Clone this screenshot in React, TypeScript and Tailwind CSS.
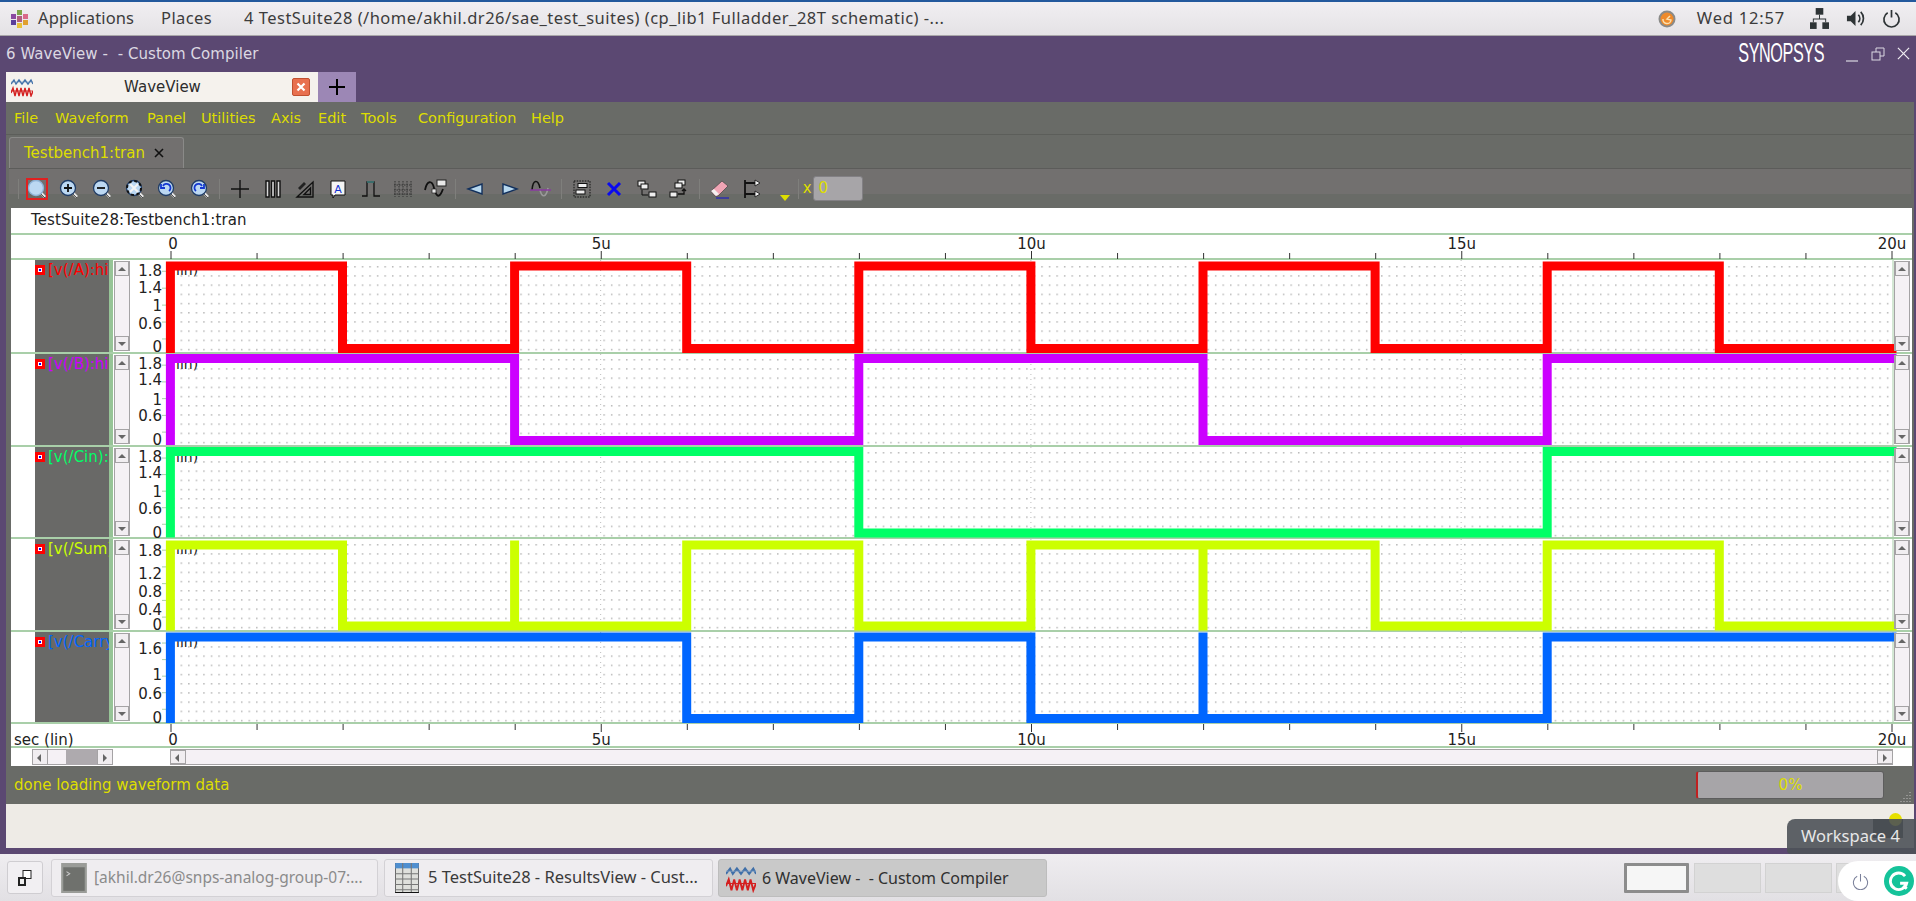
import React from "react";

const X0 = 40.4; // 0 on the time axis, inside the row svg
const US = 86.05;
const tx = (t: number) => X0 + t * US;
const TICKS = Array.from({ length: 21 }, (_, i) => i);

const ROWS = [
  { name: "[v(/A):hi", color: "#ff0000", h: 94, hi: 6, lo: 88.5, toggles: [2, 4, 6, 8, 10, 12, 14, 16, 18], dotY: 6,
    labels: [["1.8", 10], ["1.4", 27], ["1", 45], ["0.6", 63], ["0", 86]] },
  { name: "[v(/B):hi", color: "#cc00ff", h: 93, hi: 4.5, lo: 86.5, toggles: [4, 8, 12, 16], dotY: 5,
    labels: [["1.8", 9], ["1.4", 25], ["1", 45], ["0.6", 61], ["0", 85]] },
  { name: "[v(/Cin):hi", color: "#00ff66", h: 92, hi: 4.5, lo: 86, toggles: [8, 16], dotY: 5,
    labels: [["1.8", 9], ["1.4", 25], ["1", 44], ["0.6", 61], ["0", 85]] },
  { name: "[v(/Sum)", color: "#ccff00", h: 93, hi: 6, lo: 87, toggles: [2, 4, 4, 6, 8, 10, 12, 12, 14, 16, 18], dotY: 5,
    labels: [["1.8", 11], ["1.2", 34], ["0.8", 52], ["0.4", 70], ["0", 85]] },
  { name: "[v(/Carry", color: "#0066ff", h: 92, hi: 5, lo: 86.5, toggles: [6, 8, 10, 12, 12, 16], dotY: 5,
    labels: [["1.6", 16], ["1", 42], ["0.6", 61], ["0", 85]] },
] as const;

const MENU = [
  ["File", "w-[41px]"],
  ["Waveform", "w-[92px]"],
  ["Panel", "w-[54px]"],
  ["Utilities", "w-[70px]"],
  ["Axis", "w-[47px]"],
  ["Edit", "w-[43px]"],
  ["Tools", "w-[57px]"],
  ["Configuration", "w-[113px]"],
  ["Help", "w-[40px]"],
];

function tracePath(toggles: readonly number[], hi: number, lo: number) {
  let d = `M${tx(0)} ${lo}L${tx(0)} ${hi}`;
  let level = true;
  let from = 0;
  for (const t of toggles) {
    if (t > from) d += `M${tx(from)} ${level ? hi : lo}L${tx(t)} ${level ? hi : lo}`;
    d += `M${tx(t)} ${hi}L${tx(t)} ${lo}`;
    level = !level;
    from = t;
  }
  d += `M${tx(from)} ${level ? hi : lo}L${1762} ${level ? hi : lo}`;
  return d;
}

function Arrow({ dir }: { dir: "up" | "down" | "left" | "right" }) {
  const pts = { up: "1,6 9,6 5,2", down: "1,2 9,2 5,6", left: "6,1 6,9 2,5", right: "3,1 3,9 7,5" }[dir];
  return (
    <svg width="10" height="10" viewBox="0 0 10 8" className="block">
      <polygon points={pts} fill="#666" />
    </svg>
  );
}

function ScrollBtn({ dir }: { dir: "up" | "down" | "left" | "right" }) {
  const size = dir === "up" || dir === "down" ? "h-[15px] w-full" : "w-[16px] h-full";
  return (
    <div className={`${size} shrink-0 flex items-center justify-center bg-[#f1eef1] border border-[#a5a3a5]`}>
      <Arrow dir={dir} />
    </div>
  );
}

function VScroll() {
  return (
    <div className="w-[16px] shrink-0 flex flex-col justify-between bg-[#f5f1f5] border-x border-[#a5a3a5] my-px">
      <ScrollBtn dir="up" />
      <ScrollBtn dir="down" />
    </div>
  );
}

function Row({ row }: { row: (typeof ROWS)[number] }) {
  const id = `dots-${row.name.charCodeAt(4)}`;
  return (
    <div style={{ height: row.h }} className="flex border-b-2 border-[#a9cfa9]">
      <div className="w-[24px] shrink-0" />
      <div className="w-[74px] shrink-0 bg-[#696967] overflow-hidden flex items-start pt-[1px] gap-[3px]">
        <div className="w-[10px] h-[10px] mt-[4px] shrink-0 bg-white border-[3px] border-[#ff0000] flex items-center justify-center">
          <div className="w-[2px] h-[2px] bg-[#0000ff]" />
        </div>
        <span style={{ color: row.color }} className="text-[15px] leading-[18px] whitespace-nowrap">{row.name}</span>
      </div>
      <div className="w-[4px] shrink-0 bg-[#97c497] mr-px" />
      <VScroll />
      <svg className="flex-1 h-full overflow-visible" style={{ minWidth: 0 }}>
        <defs>
          <pattern id={id} x="43" y={row.dotY} width="7.55" height="9.2" patternUnits="userSpaceOnUse">
            <rect width="1.5" height="1.5" fill="#b8b8b8" />
          </pattern>
        </defs>
        <rect x="36" y="0" width="1727" height="100%" fill={`url(#${id})`} />
        {[5, 10, 15].map((t) => (
          <line key={t} x1={tx(t)} x2={tx(t)} y1="0" y2="100%" stroke="#bdbdbd" strokeDasharray="1 4" />
        ))}
        <line x1="1763" x2="1763" y1="0" y2="100%" stroke="#a9cfa9" />
        {[0.12, 0.3, 0.48, 0.66, 0.84].map((f) => (
          <line key={f} x1="32" x2="36" y1={row.h * f} y2={row.h * f} stroke="#a9cfa9" />
        ))}
        {row.labels.map(([label, y]) => (
          <text key={label} x="32" y={y + 5.5} textAnchor="end" fontSize="15" fill="#222">{label}</text>
        ))}
        <text x="46" y="15" fontSize="14" fill="#222">lin)</text>
        <path d={tracePath(row.toggles, row.hi, row.lo)} stroke={row.color} strokeWidth="9" strokeLinecap="square" fill="none" />
      </svg>
      <div className="w-[16px] shrink-0 flex mr-[2px]"><VScroll /></div>
    </div>
  );
}

function TimeAxis({ bottom }: { bottom?: boolean }) {
  const y1 = bottom ? 0 : 24;
  return (
    <div className={`relative h-[24px] ${bottom ? "border-b-2 border-[#a9cfa9]" : "border-b-0"}`}>
      <svg className="w-full h-full overflow-visible">
        {TICKS.map((t) => {
          const major = t % 5 === 0;
          const len = major ? 8 : 6;
          return (
            <line key={t} x1={160 + t * US} x2={160 + t * US} y1={y1} y2={bottom ? len : y1 - len} stroke="#333" strokeWidth="1" />
          );
        })}
        {[0, 5, 10, 15, 20].map((t) => (
          <text key={t} x={t === 0 ? 162 : 160 + t * US} y={bottom ? 21 : 14} textAnchor="middle" fontSize="15" fill="#222">
            {t === 0 ? "0" : `${t}u`}
          </text>
        ))}
        {bottom && <text x="3" y="21" fontSize="15" fill="#222">sec (lin)</text>}
      </svg>
    </div>
  );
}

function WaveIcon({ className }: { className: string }) {
  return (
    <svg viewBox="0 0 22 20" className={className} fill="none">
      <path d="M0 7 L3 3 L5 7 L8 3 L11 7 L14 3 L17 7 L20 3 L22 7" stroke="#3f6fa8" strokeWidth="1.4" />
      <line x1="0" x2="22" y1="5" y2="5" stroke="#7d9cc0" strokeWidth="0.6" />
      <path d="M0 16 L2 11 L4 19 L6 11 L8 19 L10 11 L12 19 L14 11 L16 19 L18 11 L20 19 L22 14" stroke="#d42020" strokeWidth="1.4" />
      <line x1="0" x2="22" y1="14" y2="14" stroke="#d42020" strokeWidth="0.8" />
    </svg>
  );
}

function Mag({ children, boxed }: { children?: React.ReactNode; boxed?: boolean }) {
  return (
    <svg viewBox="0 0 20 20" className={`w-[20px] h-[20px] ${boxed ? "outline-2 -outline-offset-1 outline-[#e02020]" : ""}`}>
      <line x1="12" y1="12" x2="18" y2="18" stroke="#e8e8e8" strokeWidth="2.6" />
      <line x1="13" y1="14" x2="18" y2="19" stroke="#333" strokeWidth="0.8" />
      <circle cx="9" cy="9" r="7.5" fill="#bcd8f2" stroke={boxed ? "#8fb4d8" : "#1f3c66"} strokeWidth="1.3" />
      {children}
    </svg>
  );
}

const S = { fill: "none", stroke: "#111", strokeWidth: 1.4 };

const TOOLS: (React.ReactNode | "sep")[] = [
  <Mag boxed />,
  <Mag><path d="M5 9h8M9 5v8" stroke="#111" strokeWidth="1.8" /></Mag>,
  <Mag><path d="M5 9h8" stroke="#111" strokeWidth="1.8" /></Mag>,
  <Mag><path d="M5 5l8 8M13 5l-8 8" stroke="#f4f4f4" strokeWidth="2" /><circle cx="9" cy="9" r="7" fill="none" stroke="#111" strokeWidth="2" strokeDasharray="3 2.5" /></Mag>,
  <Mag><path d="M12 12A4 4 0 1 0 6 7M4 5v4h4" fill="none" stroke="#1438d0" strokeWidth="1.8" /></Mag>,
  <Mag><path d="M6 12A4 4 0 1 1 12 7M14 5v4h-4" fill="none" stroke="#1438d0" strokeWidth="1.8" /></Mag>,
  "sep",
  <svg viewBox="0 0 20 20" className="w-[20px] h-[20px]"><path d="M10 1v18M1 10h18" {...S} /></svg>,
  <svg viewBox="0 0 20 20" className="w-[20px] h-[20px]"><path d="M3 2h3v16H3zM8.5 2h3v16h-3zM14 2h3v16h-3z" {...S} fill="#d8d8d8" /></svg>,
  <svg viewBox="0 0 20 20" className="w-[20px] h-[20px]"><path d="M18 3v15H2zM15.5 9v6.5H9z" {...S} /><path d="M3 9l6-6 2 2-6 6z" fill="#222" /></svg>,
  <svg viewBox="0 0 20 20" className="w-[20px] h-[20px]"><path d="M3 2h14v14H7l-2 3v-3H3z" fill="#f4f4f4" stroke="#111" /><text x="10" y="13.5" textAnchor="middle" fontSize="11" fill="#1030d0">A</text></svg>,
  <svg viewBox="0 0 20 20" className="w-[20px] h-[20px]"><path d="M1 17h5V3h7v14h6" fill="none" stroke="#111" strokeWidth="1.3" /><path d="M6 3h7" stroke="#4fb0b0" /></svg>,
  <svg viewBox="0 0 20 20" className="w-[20px] h-[20px]"><path d="M2 2v16M6 2v16M10 2v16M14 2v16M18 2v16M1 6h18M1 11h18M1 15h18" stroke="#333" strokeWidth="1" strokeDasharray="1.5 1" fill="none" /></svg>,
  <svg viewBox="0 0 24 20" className="w-[24px] h-[20px]"><path d="M1 11C3 1 8 1 10 9s5 12 9 1" {...S} strokeWidth="1.8" /><rect x="13" y="1" width="9" height="6" fill="#e8e8e8" stroke="#222" /><rect x="8" y="10" width="4" height="4" fill="#e8e8e8" stroke="#222" strokeWidth="0.7" /></svg>,
  "sep",
  <svg viewBox="0 0 20 20" className="w-[20px] h-[20px]"><path d="M2 10l14-5v10z" fill="#b7d8ef" stroke="#12305c" strokeWidth="1.4" /></svg>,
  <svg viewBox="0 0 20 20" className="w-[20px] h-[20px]"><path d="M18 10L4 5v10z" fill="#b7d8ef" stroke="#12305c" strokeWidth="1.4" /></svg>,
  <svg viewBox="0 0 22 20" className="w-[22px] h-[20px]"><path d="M2 11C3 0 8 0 10 9" {...S} strokeWidth="1.6" /><path d="M10 11c2 8 6 8 8-2" fill="none" stroke="#999" strokeWidth="1.6" /><path d="M0 11h21" stroke="#8a3aa0" strokeWidth="1.5" /></svg>,
  "sep",
  <svg viewBox="0 0 20 20" className="w-[20px] h-[20px]"><rect x="2" y="2" width="16" height="16" fill="none" stroke="#111" strokeDasharray="1.5 1.2" /><rect x="6" y="4.5" width="9" height="4" fill="#eee" stroke="#111" /><rect x="4" y="11" width="9" height="4" fill="#eee" stroke="#111" /></svg>,
  <svg viewBox="0 0 20 20" className="w-[20px] h-[20px]"><path d="M4 4l12 12M16 4L4 16" stroke="#0a0af0" strokeWidth="3" /></svg>,
  <svg viewBox="0 0 20 20" className="w-[20px] h-[20px]"><rect x="1" y="2" width="7" height="5" fill="#eee" stroke="#111" /><rect x="4" y="5" width="7" height="5" fill="#eee" stroke="#111" /><rect x="12" y="13" width="7" height="5" fill="#eee" stroke="#111" /><path d="M5 11v5h6" fill="none" stroke="#111" /></svg>,
  <svg viewBox="0 0 20 20" className="w-[20px] h-[20px]"><rect x="9" y="1" width="7" height="5" fill="#eee" stroke="#111" /><rect x="6" y="4" width="7" height="5" fill="#eee" stroke="#111" /><rect x="1" y="13" width="7" height="5" fill="#eee" stroke="#111" /><path d="M9 15h6v-4M13 12l2-2 2 2" fill="none" stroke="#111" strokeWidth="1.3" /></svg>,
  "sep",
  <svg viewBox="0 0 22 20" className="w-[22px] h-[20px]"><path d="M2 12L13 2l6 5L9 17H6z" fill="#f0a4b4" stroke="#444" strokeWidth="0.7" /><path d="M2 12l5 5 3-2-5-5z" fill="#f4f0f0" /><path d="M7 19h13" stroke="#1010d0" strokeWidth="1" /></svg>,
  <svg viewBox="0 0 20 20" className="w-[20px] h-[20px]"><path d="M3 1v18M3 4h10M3 15h10" stroke="#111" strokeWidth="1.8" /><path d="M13 1l5 3-5 3zM13 12l5 3-5 3z" fill="#f2f2f2" stroke="#111" strokeWidth="0.8" /></svg>,
];

function Toolbar() {
  return (
    <div className="h-[40px] flex items-center pl-[8.5px] mx-[3px] border-t border-[#5c5c5a] bg-[linear-gradient(#72706f_0,#72706f_65%,#696b67_65%)]">
      <div className="w-px h-[20px] bg-[#7f7f7c] mr-[2px]" />
      {TOOLS.map((t, i) =>
        t === "sep" ? (
          <div key={i} className="w-px h-[20px] bg-[#7f7f7c] mx-[3.4px]" />
        ) : (
          <div key={i} className="w-[32.6px] h-[24px] flex items-center justify-center">{t}</div>
        )
      )}
      <svg width="10" height="6" viewBox="0 0 10 6" className="ml-[11px] mt-[18px]"><polygon points="0,0 10,0 5,6" fill="#dede00" /></svg>
      <div className="w-px h-[20px] bg-[#7f7f7c] ml-[8px]" />
      <span className="ml-[4px] text-[15px] text-[#dede00]">x</span>
      <div className="ml-[1px] w-[50px] h-[25px] rounded-[3px] bg-[#a7a5a8] border border-[#828084] text-[15px] leading-[22px] pl-[5px] text-[#dede00]">0</div>
    </div>
  );
}

function HScrollbars() {
  return (
    <div className="h-[18px] flex">
      <div className="w-[21px]" />
      <div className="w-[81px] h-[16px] mt-[1px] flex">
        <ScrollBtn dir="left" />
        <div className="w-[18px] bg-[#f5f1f5] border-y border-[#a5a3a5]" />
        <div className="w-[31px] bg-[#aeaaae]" />
        <ScrollBtn dir="right" />
      </div>
      <div className="w-[57px]" />
      <div className="flex-1 h-[16px] mt-[1px] flex justify-between bg-[#f5f1f5] border-y border-[#a5a3a5]">
        <ScrollBtn dir="left" />
        <ScrollBtn dir="right" />
      </div>
      <div className="w-[19px]" />
    </div>
  );
}

function TopPanel() {
  const ui = "[font-family:'Noto_Sans',sans-serif]";
  return (
    <div className={`${ui} h-[36px] shrink-0 border-t-2 border-[#23599d] border-b border-b-[#a8a6a8] bg-[linear-gradient(#f1eff2,#e4e2e5)] flex items-center text-[16.5px] text-[#3c3c3c]`}>
      <svg viewBox="0 0 18 18" className="w-[18px] h-[18px] ml-[11px] mr-[9px]">
        <rect x="6" y="0" width="5" height="5" fill="#7fa64a" />
        <rect x="12" y="4" width="5" height="5" fill="#d96a8a" />
        <rect x="12" y="10" width="5" height="5" fill="#e0a030" />
        <rect x="6" y="13" width="5" height="5" fill="#e8c23a" />
        <rect x="0" y="10" width="5" height="5" fill="#5a3f9a" />
        <rect x="0" y="4" width="5" height="5" fill="#8a4aa0" />
        <rect x="6" y="6" width="5" height="6" fill="#b06080" />
      </svg>
      <span className="tracking-[0.1px]">Applications</span>
      <span className="ml-[27px] tracking-[0.4px]">Places</span>
      <span className="ml-[32px] tracking-[0.48px]">4 TestSuite28 (/home/akhil.dr26/sae_test_suites) (cp_lib1 Fulladder_28T schematic) -...</span>
      <div className="ml-auto flex items-center">
        <svg viewBox="0 0 18 18" className="w-[18px] h-[18px]"><circle cx="9" cy="9" r="8.5" fill="#8a8a88" /><circle cx="9" cy="9" r="6.5" fill="#ee8a2a" /><path d="M5 9a4 4 0 0 0 8 1l-4-1 3-3" fill="none" stroke="#fbe0b0" strokeWidth="1.5" /></svg>
        <span className="ml-[21px] tracking-[0.8px]">Wed 12:57</span>
        <svg viewBox="0 0 20 22" className="w-[19px] h-[21px] ml-[25px]" fill="#2e3436"><rect x="6" y="0" width="8" height="7" /><rect x="0" y="15" width="7" height="7" /><rect x="13" y="15" width="7" height="7" /><path d="M9.5 7h1v4H17v4h-1v-3H4v3H3v-4h6.500z" /></svg>
        <svg viewBox="0 0 20 20" className="w-[19px] h-[19px] ml-[17px]" fill="none"><path d="M1 7h4l5-5v16l-5-5H1z" fill="#2e3436" /><path d="M13 6a6 6 0 0 1 0 8M15.500 3a10 10 0 0 1 0 14" stroke="#2e3436" strokeWidth="1.8" /></svg>
        <svg viewBox="0 0 20 20" className="w-[19px] h-[19px] ml-[17px] mr-[15px]" fill="none" stroke="#2e3436" strokeWidth="1.8"><path d="M6 4a8 8 0 1 0 8 0M10 1v8" /></svg>
      </div>
    </div>
  );
}

function TitleRow() {
  return (
    <div className="h-[36px] flex items-center pl-[6px] pt-[1px] text-[15px] tracking-[0.06px] text-[#dcd8e2]">
      <span className="whitespace-pre">6 WaveView -  - Custom Compiler</span>
      <div className="ml-auto flex items-center pr-[6px] pb-[2px]">
        <span className="[font-family:'Liberation_Sans',sans-serif] text-[27px] leading-none tracking-tight scale-x-[0.6] origin-right text-white mr-[8px]">SYNOPSYS</span>
        <svg viewBox="0 0 12 12" className="w-[12px] h-[12px] ml-[14px] mt-[4px]"><path d="M0 11h12" stroke="#dcd8e2" strokeWidth="1.2" /></svg>
        <svg viewBox="0 0 14 14" className="w-[14px] h-[14px] ml-[13px]" fill="none" stroke="#dcd8e2"><rect x="1" y="5" width="8" height="8" /><path d="M5 5V1h8v8H9" /></svg>
        <svg viewBox="0 0 14 14" className="w-[13px] h-[13px] ml-[12px]" fill="none" stroke="#f0eef2" strokeWidth="1.3"><path d="M1 1l12 12M13 1L1 13" /></svg>
      </div>
    </div>
  );
}

function TabRow() {
  return (
    <div className="h-[30px] flex pl-[6px]">
      <div className="w-[312px] relative flex items-center justify-center bg-[#f5f2ed] text-[15px] text-[#2c2c2c] pl-[1px] pt-[1px]">
        <WaveIcon className="absolute left-[5px] top-[5px] w-[22px] h-[20px]" />
        <span>WaveView</span>
        <div className="absolute right-[8px] top-[6px] w-[18px] h-[18px] rounded-[2px] bg-[#e8704f] border border-[#c05030] flex items-center justify-center">
          <svg viewBox="0 0 10 10" className="w-[10px] h-[10px]"><path d="M1.500 1.500l7 7M8.500 1.500l-7 7" stroke="#fff" strokeWidth="2.2" /></svg>
        </div>
      </div>
      <div className="w-[38px] bg-[#9c87b5] flex items-center justify-center">
        <svg viewBox="0 0 16 16" className="w-[16px] h-[16px]"><path d="M8 0v16M0 8h16" stroke="#000" strokeWidth="2" /></svg>
      </div>
    </div>
  );
}

function Taskbar() {
  const ui = "[font-family:'Noto_Sans',sans-serif]";
  const task = "h-[38px] rounded-[3px] border flex items-center whitespace-nowrap overflow-hidden";
  return (
    <div className={`${ui} relative h-[47px] shrink-0 bg-[linear-gradient(#efedf0,#e2e0e4)] flex items-center`}>
      <div className="w-[36px] h-[33px] ml-[7px] rounded-[3px] border border-[#cfcdd1] bg-[#f1eff2] flex items-center justify-center">
        <svg viewBox="0 0 14 16" className="w-[14px] h-[16px]"><rect x="5" y="0.500" width="8" height="8" fill="#fff" stroke="#222" /><rect x="0" y="7" width="8" height="9" fill="#222" /><rect x="2" y="9" width="4" height="5" fill="#eee" /></svg>
      </div>
      <div className={`${task} w-[327px] ml-[8px] pl-[9px] gap-[7px] text-[15.5px] bg-[#efedf0] border-[#d3d1d5] text-[#8b8b8b]`}>
        <svg viewBox="0 0 24 28" className="w-[26px] h-[30px] shrink-0"><rect x="0" y="0" width="24" height="28" fill="#9a9c98" /><rect x="2" y="4" width="20" height="22" fill="#6f716d" /><path d="M5 8l3 2-3 2" stroke="#c8c8c8" fill="none" /></svg>
        <span>[akhil.dr26@snps-analog-group-07:...</span>
      </div>
      <div className={`${task} w-[329px] ml-[6px] pl-[10px] gap-[9px] text-[16.5px] bg-[#efedf0] border-[#d3d1d5] text-[#3a3a3a]`}>
        <svg viewBox="0 0 22 28" className="w-[24px] h-[30px] shrink-0"><rect width="22" height="28" fill="#dfe0dc" stroke="#444" /><rect width="22" height="5" fill="#4f8fd0" /><path d="M7 0v28M15 0v28M0 10h22M0 15h22M0 20h22M0 25h22" stroke="#777" /><path d="M0 27.500h22" stroke="#111" /></svg>
        <span>5 TestSuite28 - ResultsView - Cust...</span>
      </div>
      <div className={`${task} w-[329px] ml-[5px] pl-[7px] gap-[6px] text-[16px] bg-[#c9c9c9] border-[#bdbdbd] text-[#303030]`}>
        <WaveIcon className="w-[30px] h-[30px] shrink-0" />
        <span className="whitespace-pre">6 WaveView -  - Custom Compiler</span>
      </div>
      <div className="w-[65px] h-[30px] ml-[577px] bg-[#f6f6f6] border-[3px] border-[#8c8c8c] rounded-[1px]" />
      <div className="w-[67px] h-[30px] ml-[5px] bg-[#dedede] border border-[#d2d2d2]" />
      <div className="w-[67px] h-[30px] ml-[4px] bg-[#dedede] border border-[#d2d2d2]" />
      <div className="w-[30px] h-[30px] ml-[4px] bg-[#dedede] border border-[#d2d2d2]" />
      <div className="absolute right-0 top-[7px] w-[78px] h-[40px] bg-white rounded-l-[20px] flex items-center">
        <svg viewBox="0 0 18 18" className="w-[17px] h-[17px] ml-[14px]" fill="none" stroke="#7a809a" strokeWidth="1.1"><path d="M5.500 3.500a7.500 7.500 0 1 0 7 0M9 1v8" /></svg>
        <div className="ml-[15px] w-[30px] h-[30px] rounded-full bg-[#15c39a] flex items-center justify-center">
          <svg viewBox="0 0 20 20" className="w-[22px] h-[22px]" fill="none" stroke="#fff" strokeWidth="2.600"><path d="M15.500 5.500A7.500 7.500 0 1 0 17 12h-6M14 14l3 3" /></svg>
        </div>
      </div>
    </div>
  );
}

export default function App() {
  return (
    <div className="relative w-[1916px] h-[901px] overflow-hidden flex flex-col bg-[#5b4872] [font-family:'DejaVu_Sans',sans-serif]">
      <TopPanel />
      <div className="flex-1 flex flex-col min-h-0">
        <TitleRow />
        <TabRow />
        <div className="flex flex-col mx-[6px] mr-[2px] mb-[6px] flex-1 min-h-0 bg-[#eeebe6]">
          <div className="bg-[#696b67] flex flex-col">
            <div className="h-[33px] flex items-center pl-[8px] pt-[1px] text-[14.5px] text-[#dede00] border-b border-[#5c5e5a]">
              {MENU.map(([m, w]) => (
                <span key={m} className={w}>{m}</span>
              ))}
            </div>
            <div className="h-[33px] flex items-end pl-[3px]">
              <div className="h-[31px] w-[175px] flex items-center pl-[14px] gap-[9px] rounded-t-[3px] border border-b-0 border-[#8a8a88] bg-[#72706f] text-[15px] text-[#dede00]">
                <span>Testbench1:tran</span>
                <svg viewBox="0 0 10 10" className="w-[10px] h-[10px]"><path d="M1 1l8 8M9 1l-8 8" stroke="#111" strokeWidth="1.6" /></svg>
              </div>
            </div>
            <Toolbar />
            <div className="mx-[5px] mr-[2px] bg-white text-[14px] text-[#222]">
              <div className="h-[27px] flex items-center pl-[20px] text-[15px] tracking-[0.1px] border-b-2 border-[#a9cfa9]">TestSuite28:Testbench1:tran</div>
              <TimeAxis />
              <div className="border-t-2 -mt-px border-[#a9cfa9]">
                {ROWS.map((r) => <Row key={r.name} row={r} />)}
              </div>
              <TimeAxis bottom />
              <HScrollbars />
            </div>
            <div className="relative h-[38px] flex items-center pl-[8px] text-[15px] text-[#dede00]">
              <span>done loading waveform data</span>
              <div className="ml-auto mr-[30px] w-[188px] h-[28px] rounded-[3px] bg-[#a7a5a8] border border-[#5d5d5d] border-l-2 border-l-[#c02020] flex items-center justify-center text-[15px]">0%</div>
              <svg viewBox="0 0 12 12" className="absolute right-[2px] bottom-px w-[12px] h-[12px]">
                <path d="M10 1v1M7 4v1M10 4v1M4 7v1M7 7v1M10 7v1M1 10v1M4 10v1M7 10v1M10 10v1" stroke="#a0a09e" strokeWidth="1.6" />
              </svg>
            </div>
          </div>
        </div>
      </div>
      <Taskbar />
      <div className="absolute left-[1873px] top-[818px] w-[31px] h-[28px]">
        <div className="absolute left-0 top-[1px] w-[30px] h-[19px] bg-[#2c2e2c]" />
        <div className="absolute left-[16px] top-[-5px] w-[13px] h-[13px] rounded-full bg-[#e6e000]" />
      </div>
      <div className="absolute left-[1787px] top-[819px] w-[129px] h-[35px] rounded-tl-[8px] rounded-bl-[4px] bg-[#4c5258]/90 flex items-center pl-[14px] text-[16.5px] text-[#e8e8e8] [font-family:'Noto_Sans',sans-serif]">Workspace 4</div>
    </div>
  );
}
